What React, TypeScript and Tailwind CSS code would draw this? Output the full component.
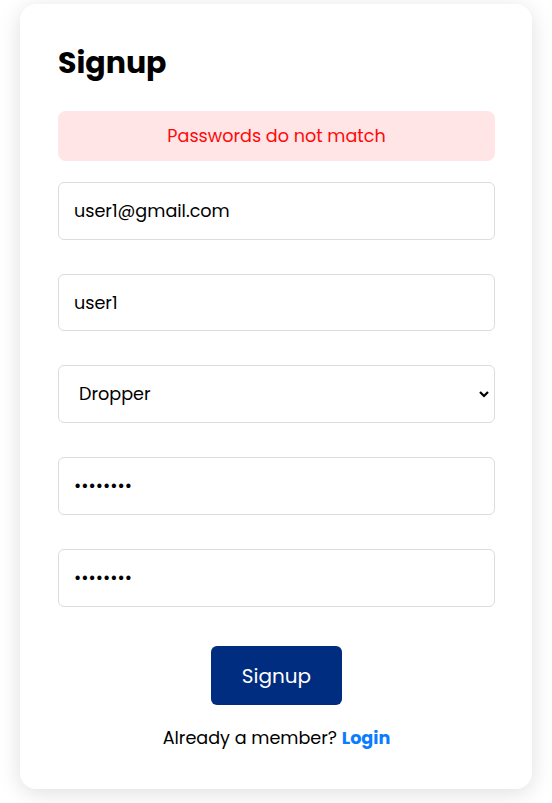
import React from "react";

export default function App() {
  const font = { fontFamily: "Poppins, 'Open Sans', 'Noto Sans', sans-serif" };
  const inputCls =
    "h-[57.6px] w-full rounded-md border border-[#dcdcdc] px-[15px] text-[17.6px] text-black outline-none";
  return (
    <div className="min-h-screen bg-white pt-[4px] pl-[20px]" style={font}>
      <div className="w-[512px] rounded-2xl bg-white shadow-[0_4px_22px_rgba(0,0,0,0.13)] pl-[38px] pr-[37px] pt-[41px] pb-[37.5px]">
        <h1 className="text-[30px] leading-[36px] font-bold text-black">Signup</h1>
        <div className="mt-[30px] h-[50px] rounded-lg bg-[#ffe5e6] flex items-center justify-center text-[17.6px] text-[#ff0a0a]">
          Passwords do not match
        </div>
        <form className="mt-[21px] flex flex-col gap-[34.15px]" onSubmit={(e) => e.preventDefault()}>
          <input className={inputCls} defaultValue="user1@gmail.com" />
          <input className={inputCls} defaultValue="user1" />
          <div className="relative">
            <select
              className="h-[57.6px] w-full appearance-none rounded-md border border-[#dcdcdc] bg-white pl-[20px] pr-[30px] text-[17.6px] text-black outline-none"
              defaultValue="Dropper"
            >
              <option>Dropper</option>
              <option>Sender</option>
            </select>
            <svg
              className="pointer-events-none absolute right-[5px] top-1/2 -translate-y-1/2"
              width="12"
              height="8"
              viewBox="0 0 12 8"
            >
              <path d="M2 2 L6 6 L10 2" fill="none" stroke="#000" strokeWidth="2.2" />
            </svg>
          </div>
          <input type="password" className={inputCls} defaultValue="password" />
          <input type="password" className={inputCls} defaultValue="passwor1" />
        </form>
        <div className="mt-[39.5px] flex justify-center">
          <button className="h-[59px] w-[131px] rounded-md bg-[#002d80] text-[20px] text-white">Signup</button>
        </div>
        <p className="mt-[20px] text-center text-[17.6px] leading-[26px] text-black">
          Already a member? <a className="font-bold text-[#0a7cff]" href="#">Login</a>
        </p>
      </div>
    </div>
  );
}
